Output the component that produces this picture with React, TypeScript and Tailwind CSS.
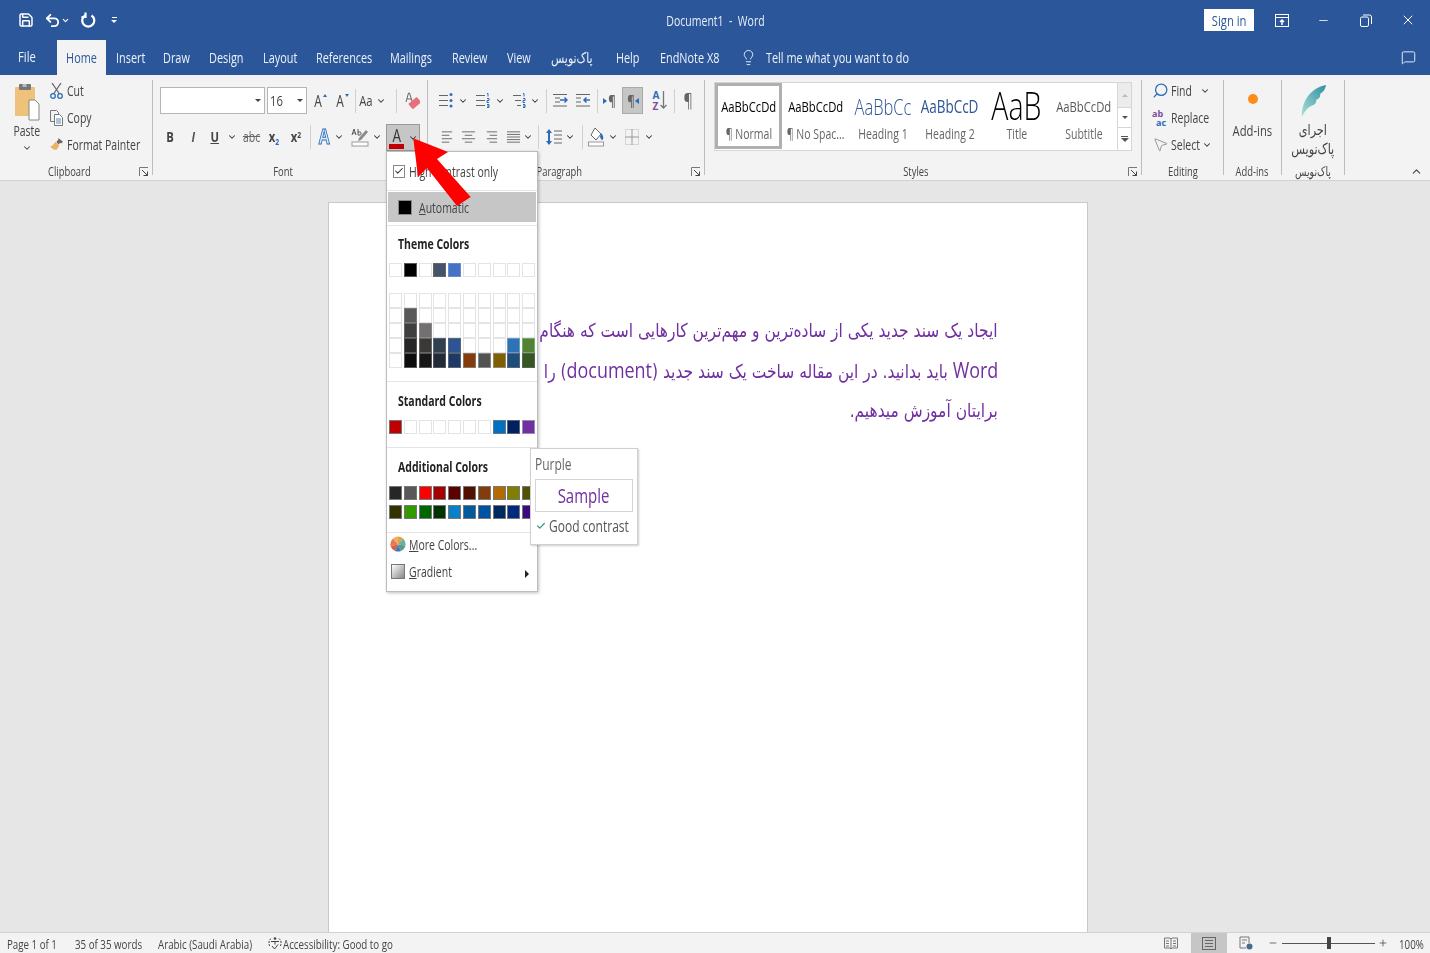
import React from 'react';
import { Save, Undo2, ChevronDown, ChevronUp, Lightbulb, MessageSquare, Minus, X, Check, Plus, Search, MousePointer2 } from 'lucide-react';

const tabs = [
  { t: 'Insert', w: 'w-[27px]' },
  { t: 'Draw', w: 'w-[26px]' },
  { t: 'Design', w: 'w-[34px]' },
  { t: 'Layout', w: 'w-[33px]' },
  { t: 'References', w: 'w-[54px]' },
  { t: 'Mailings', w: 'w-[42px]' },
  { t: 'Review', w: 'w-[35px]' },
  { t: 'View', w: 'w-[24px]' },
  { t: 'پاک‌نویس', w: 'w-[45px]' },
  { t: 'Help', w: 'w-[24px]' },
  { t: 'EndNote X8', w: 'w-[59px]' },
];

const W = 'border-[#e4e4e4] bg-white';
const themeRow = [W, 'border-[#555] bg-black', W, 'border-[#666] bg-[#44546a]', 'border-[#6d8ccf] bg-[#4472c4]', W, W, W, W, W];
const tints = [
  [W, W, W, W, W],
  [W, 'border-[#777] bg-[#595959]', 'border-[#666] bg-[#3f3f3f]', 'border-[#555] bg-[#262626]', 'border-[#555] bg-[#0d0d0d]'],
  [W, W, 'border-[#888] bg-[#757070]', 'border-[#666] bg-[#3b3838]', 'border-[#555] bg-[#171717]'],
  [W, W, W, 'border-[#567] bg-[#323f4f]', 'border-[#556] bg-[#222b35]'],
  [W, W, W, 'border-[#567] bg-[#2f5496]', 'border-[#567] bg-[#1f3864]'],
  [W, W, W, W, 'border-[#876] bg-[#843c0c]'],
  [W, W, W, W, 'border-[#888] bg-[#525252]'],
  [W, W, W, W, 'border-[#986] bg-[#7f6000]'],
  [W, W, W, 'border-[#69c] bg-[#2e74b5]', 'border-[#568] bg-[#1f4e79]'],
  [W, W, W, 'border-[#7a6] bg-[#538135]', 'border-[#565] bg-[#375623]'],
];
const standardRow = ['border-[#777] bg-[#c00000]', W, W, W, W, W, W, 'border-[#678] bg-[#0070c0]', 'border-[#567] bg-[#002060]', 'border-[#98b] bg-[#7030a0]'];
const additional = [
  'bg-[#262626]', 'bg-[#595959]', 'bg-[#ff0000]', 'bg-[#a80000]', 'bg-[#5c0000]', 'bg-[#511000]', 'bg-[#833c0b]', 'bg-[#b36b00]', 'bg-[#808000]', 'bg-[#525200]',
  'bg-[#333300]', 'bg-[#339900]', 'bg-[#006600]', 'bg-[#003300]', 'bg-[#0b7fc7]', 'bg-[#005a9e]', 'bg-[#0052a5]', 'bg-[#002960]', 'bg-[#002a7f]', 'bg-[#3b0a7f]',
];

const styles = [
  { sample: 'AaBbCcDd', label: '¶ Normal', cls: 'pt-[2px] text-[15px] text-black', selected: true },
  { sample: 'AaBbCcDd', label: '¶ No Spac...', cls: 'pt-[2px] text-[15px] text-black' },
  { sample: 'AaBbCc', label: 'Heading 1', cls: 'pt-[2px] text-[22px] leading-[30px] font-light text-[#2f5496]' },
  { sample: 'AaBbCcD', label: 'Heading 2', cls: 'pt-[2px] text-[18px] text-[#2f5496]' },
  { sample: 'AaB', label: 'Title', cls: 'text-[38px] leading-[34px] font-light text-black' },
  { sample: 'AaBbCcDd', label: 'Subtitle', cls: 'pt-[2px] text-[15px] text-[#595959]' },
];

// the reference's type is squeezed sideways, no installed font is that narrow
function Nar({ className = '', left, children }: { className?: string; left?: boolean; children: React.ReactNode }) {
  return (
    <span className={`flex shrink-0 ${left ? 'justify-start' : 'justify-center'} ${className}`}>
      <span className={`shrink-0 whitespace-nowrap scale-x-[0.75] ${left ? 'origin-left' : 'origin-center'}`}>{children}</span>
    </span>
  );
}

function Chev({ className = '' }: { className?: string }) {
  return (
    <span className={`flex shrink-0 items-center justify-center ${className}`}>
      <ChevronDown className="h-[10px] w-[10px] shrink-0 text-[#333]" strokeWidth={2.5} />
    </span>
  );
}

function Sep({ className = '' }: { className?: string }) {
  return <div className={`h-[24px] w-px shrink-0 bg-[#d0d0d0] ${className}`} />;
}

function Cell({ className = '', children }: { className?: string; children?: React.ReactNode }) {
  return <div className={`flex h-full shrink-0 items-center justify-center ${className}`}>{children}</div>;
}

function Lines({ rows }: { rows: [number, number][] }) {
  const step = 11 / (rows.length - 1);
  return (
    <svg width="15" height="14" viewBox="0 0 16 14" fill="none" stroke="#666" strokeWidth="1">
      {rows.map(([a, b], i) => (
        <line key={i} x1={a} x2={b} y1={1.5 + i * step} y2={1.5 + i * step} />
      ))}
    </svg>
  );
}

function ListIcon({ kind }: { kind: 'bullet' | 'number' | 'multi' }) {
  return (
    <svg width="15" height="17" viewBox="0 0 15 17">
      <g stroke="#666" strokeWidth="1">
        <line x1={kind === 'multi' ? 1 : 0} x2="9" y1="3.500" y2="3.500" />
        <line x1={kind === 'multi' ? 3 : 0} x2="9" y1="8.500" y2="8.500" />
        <line x1={kind === 'multi' ? 5 : 0} x2="9" y1="13.500" y2="13.500" />
      </g>
      {kind === 'bullet' ? (
        <g fill="#2b6cb8">
          <circle cx="12" cy="2.500" r="1.500" />
          <circle cx="12" cy="8.500" r="1.500" />
          <circle cx="12" cy="14" r="1.500" />
        </g>
      ) : (
        <g fill="none" stroke="#2b6cb8" strokeWidth="1">
          <path d="M11 1.500h1v3M11 6.500h2v2h-2v2h2M11 12.500h2v3h-2M11 14h2" />
        </g>
      )}
    </svg>
  );
}

function IndentIcon({ flip }: { flip?: boolean }) {
  return (
    <svg width="15" height="15" viewBox="0 0 15 15" fill="none">
      <g stroke="#666">
        <line x1="0" x2="14" y1="1.500" y2="1.500" />
        <line x1={flip ? 0 : 2} x2={flip ? 5 : 7} y1="5" y2="5" />
        <line x1={flip ? 0 : 2} x2={flip ? 5 : 7} y1="9" y2="9" />
        <line x1="0" x2="14" y1="13" y2="13" />
      </g>
      <path d={flip ? 'M14 7H8M10.500 4.500L8 7l2.500 2.500' : 'M7 7h7M11.500 4.500L14 7l-2.500 2.500'} stroke="#2b6cb8" strokeWidth="1.500" />
    </svg>
  );
}

function Launcher() {
  return (
    <svg width="10" height="10" viewBox="0 0 10 10" fill="none" stroke="#777" strokeWidth="1">
      <path d="M.5 9V.5H9" />
      <path d="M3 3l5.500 5.500M8.500 4.500v4h-4" stroke="#444" />
    </svg>
  );
}

function Group({ w, label, launcher, sep = true, children }: { w: string; label: React.ReactNode; launcher?: boolean; sep?: boolean; children: React.ReactNode }) {
  return (
    <div className={`flex h-full shrink-0 ${w}`}>
      <div className="flex min-w-0 flex-1 flex-col">
        <div className="h-[88px]">{children}</div>
        <div className="flex h-[18px] items-center pt-[2px] text-[12.500px] text-[#444]">
          <Nar className="min-w-0 flex-1">{label}</Nar>
          {launcher && <span className="flex w-[14px] justify-center pr-[2px]"><Launcher /></span>}
        </div>
      </div>
      {sep && <div className="my-[5px] w-px bg-[#bdbdbd]" />}
    </div>
  );
}

function Row({ children, className = '' }: { children: React.ReactNode; className?: string }) {
  return <div className={`flex h-[27px] items-center ${className}`}>{children}</div>;
}

function Swatches({ items }: { items: string[] }) {
  return (
    <div className="ml-[2px] grid w-[148px] grid-cols-10">
      {items.map((c, i) => <div key={i} className={`h-[14px] w-[13px] border ${c}`} />)}
    </div>
  );
}

function Heading({ className = 'h-[38px]', children }: { className?: string; children: React.ReactNode }) {
  return (
    <div className={`flex items-center pb-[2px] pl-[11px] text-[14px] font-bold text-[#222] ${className}`}>
      <Nar left>{children}</Nar>
    </div>
  );
}

function ColorMenu() {
  return (
    <div className="absolute left-[386px] top-[151px] h-[441px] w-[152px] border border-[#bcbcbc] bg-white shadow-[1px_1px_3px_rgba(0,0,0,0.25)]">
      <div className="flex h-[38px] items-center pl-[6px] text-[14px] text-[#444]">
        <span className="mr-[4px] flex h-[13px] w-[12px] items-center justify-center border border-[#888]">
          <Check className="h-[10px] w-[10px] text-[#333]" strokeWidth={2.5} />
        </span>
        <Nar left>High contrast only</Nar>
      </div>
      <div className="h-px bg-[#e4e4e4]" />
      <div className="mx-px mt-px flex h-[30px] items-center bg-[#c6c6c6] pl-[10px] text-[14px] text-[#444]">
        <span className="mr-[7px] h-[15px] w-[14px] border border-[#888] bg-black" />
        <Nar left><span className="underline">A</span>utomatic</Nar>
      </div>
      <div className="mt-[3px] h-px bg-[#e4e4e4]" />
      <Heading className="h-[37px]">Theme Colors</Heading>
      <Swatches items={themeRow} />
      <div className="ml-[2px] mt-[16px] grid w-[148px] grid-cols-10">
        {tints.map((col, i) => (
          <div key={i} className="flex flex-col">
            {col.map((c, j) => <div key={j} className={`h-[15px] w-[13px] border ${c}`} />)}
          </div>
        ))}
      </div>
      <div className="mt-[13px] h-px bg-[#e4e4e4]" />
      <Heading>Standard Colors</Heading>
      <Swatches items={standardRow} />
      <div className="mt-[13px] h-px bg-[#e4e4e4]" />
      <Heading>Additional Colors</Heading>
      <div className="ml-[2px] grid w-[148px] grid-cols-10 gap-y-[5px]">
        {additional.map((c, i) => <div key={i} className={`h-[14px] w-[13px] border border-[#777] ${c}`} />)}
      </div>
      <div className="mt-[13px] h-px bg-[#e4e4e4]" />
      <div className="flex h-[23px] items-center pb-px pl-[3px] text-[14px] text-[#444]">
        <svg width="16" height="17" viewBox="0 0 16 17" className="mr-[3px] shrink-0">
          <path d="M8 8.500L3 2.500A8 8 0 0 1 8 .5z" fill="#f0b060" />
          <path d="M8 8.500V.5a8 8 0 0 1 5 2z" fill="#e8a040" />
          <path d="M8 8.500l5-6a8 8 0 0 1 2.500 7z" fill="#6fae9e" />
          <path d="M8 8.500l7.500 1A8 8 0 0 1 11 15z" fill="#5a9a8a" />
          <path d="M8 8.500L11 15a8 8 0 0 1-6 0z" fill="#3f78c0" />
          <path d="M8 8.500L5 15A8 8 0 0 1 .5 10z" fill="#d86040" />
          <path d="M8 8.500L.5 10A8 8 0 0 1 3 2.500z" fill="#e87a50" />
        </svg>
        <Nar left><span className="underline">M</span>ore Colors...</Nar>
      </div>
      <div className="flex h-[31px] items-center pl-[4px] pr-[8px] text-[14px] text-[#444]">
        <span className="mr-[4px] h-[15px] w-[14px] shrink-0 border border-[#777] bg-gradient-to-br from-white to-[#888]" />
        <Nar left className="flex-1"><span className="underline">G</span>radient</Nar>
        <span className="mt-[4px] h-0 w-0 border-y-[4px] border-l-[4px] border-y-transparent border-l-[#222]" />
      </div>
    </div>
  );
}

function ContrastTip() {
  return (
    <div className="absolute left-[530px] top-[448px] flex h-[97px] w-[108px] flex-col border border-[#cfcfcf] bg-white px-[4px] shadow-[1px_1px_2px_rgba(0,0,0,0.2)]">
      <div className="flex h-[30px] items-center text-[16px] text-[#666]"><Nar left>Purple</Nar></div>
      <div className="flex h-[33px] items-center justify-center border border-[#d4d4d4] text-[20px] text-[#7030a0]"><Nar>Sample</Nar></div>
      <div className="flex h-[31px] items-center pb-[3px] text-[16px] text-[#555]">
        <Check className="ml-[1px] mr-[3px] h-[12px] w-[10px] shrink-0 text-[#3a9a8a]" strokeWidth={3} />
        <Nar left>Good contrast</Nar>
      </div>
    </div>
  );
}

export default function App() {
  return (
    <div className="relative flex h-[953px] w-[1430px] flex-col overflow-hidden bg-[#e6e6e6] font-['Open_Sans','DejaVu_Sans',sans-serif]">
      {/* title bar */}
      <div className="flex h-[40px] shrink-0 items-center bg-[#2b579a] text-white">
        <div className="flex w-[240px] items-center pl-[18px]">
          <Save className="h-[16px] w-[16px]" strokeWidth={2.2} />
          <Undo2 className="ml-[10px] h-[17px] w-[17px]" strokeWidth={2.6} />
          <ChevronDown className="h-[9px] w-[9px]" strokeWidth={3} />
          <svg width="15" height="16" viewBox="0 0 15 16" fill="none" stroke="white" strokeWidth="2.200" className="ml-[11px]">
            <path d="M10.500 3.500a6 6 0 1 1-6.500 0" />
            <path d="M4.500 .5v4.500H.5" />
          </svg>
          <span className="ml-[15px] flex flex-col items-center">
            <span className="mb-[2px] h-px w-[5px] bg-white" />
            <span className="h-0 w-0 border-x-[3px] border-t-[3px] border-x-transparent border-t-white" />
          </span>
        </div>
        <div className="flex-1 pl-[4px] text-[14px] text-[#e8eef7]"><Nar>Document1&nbsp; - &nbsp;Word</Nar></div>
        <div className="flex w-[244px] items-center justify-end pr-[14px]">
          <span className="mr-[21px] flex h-[22px] w-[50px] items-center justify-center bg-white text-[15px] text-[#2b579a]"><Nar>Sign in</Nar></span>
          <svg width="14" height="13" viewBox="0 0 14 13" fill="none" stroke="white" className="mr-[28px]">
            <rect x=".5" y=".5" width="13" height="12" />
            <path d="M.5 3.500h13" />
            <path d="M7 11V6M5 8l2-2 2 2" strokeWidth="1.500" />
          </svg>
          <Minus className="mr-[30px] h-[13px] w-[13px]" strokeWidth={1.5} />
          <svg width="12" height="13" viewBox="0 0 12 13" fill="none" stroke="white" className="mr-[28px]">
            <rect x=".5" y="3" width="8" height="9.500" rx="1.500" />
            <path d="M3 1h6.500a2 2 0 0 1 2 2v7" />
          </svg>
          <X className="h-[16px] w-[16px]" strokeWidth={1.5} />
        </div>
      </div>

      {/* tabs */}
      <div className="flex h-[35px] shrink-0 items-center bg-[#2b579a] text-[14.500px] text-[#eef2f8]">
        <span className="w-[57px] pb-[2px] pl-[18px]"><Nar left className="text-[15px]">File</Nar></span>
        <span className="flex h-full w-[49px] items-center justify-center bg-[#f3f3f3] text-[#2b579a]"><Nar>Home</Nar></span>
        <div className="ml-[10px] flex items-center gap-[20px]">
          {tabs.map(({ t, w }) => <Nar key={t} left className={w}>{t}</Nar>)}
        </div>
        <Lightbulb className="ml-[21px] h-[21px] w-[17px]" strokeWidth={1.3} />
        <Nar left className="ml-[9px] flex-1">Tell me what you want to do</Nar>
        <MessageSquare className="mr-[14px] h-[15px] w-[15px]" strokeWidth={1.5} />
      </div>

      {/* ribbon */}
      <div className="relative flex h-[106px] shrink-0 border-b border-[#d2d2d2] bg-[#f3f3f3] text-[#444]">
        <Group w="w-[153px]" label="Clipboard" launcher>
          <div className="flex h-full pl-[4px]">
            <div className="flex w-[46px] shrink-0 flex-col items-center pt-[9px]">
              <svg width="26" height="37" viewBox="0 0 26 37" className="shrink-0">
                <rect x="1" y="3" width="20" height="29" rx="1" fill="#eec27a" />
                <rect x="5" y="0" width="12" height="6" rx="1" fill="#777" />
                <rect x="8.500" y="0" width="4" height="3" fill="#bbb" />
                <path d="M15 16h6l4 4v16H15z" fill="#fff" stroke="#888" />
              </svg>
              <Nar className="h-[20px] text-[14px] leading-[20px]">Paste</Nar>
              <ChevronDown className="mt-[2px] h-[10px] w-[10px]" strokeWidth={2.5} />
            </div>
            <div className="pt-[2px] text-[14px]">
              <Row>
                <svg width="13" height="17" viewBox="0 0 13 17" fill="none" className="mr-[4px] shrink-0">
                  <path d="M2 1l7.500 11M11 1L3.500 12" stroke="#666" strokeWidth="1.300" />
                  <circle cx="3" cy="14" r="2.300" stroke="#2b6cb8" strokeWidth="1.300" />
                  <circle cx="10" cy="14" r="2.300" stroke="#2b6cb8" strokeWidth="1.300" />
                </svg>
                <Nar left>Cut</Nar>
              </Row>
              <Row>
                <svg width="13" height="16" viewBox="0 0 13 16" fill="none" stroke="#777" className="mr-[4px] shrink-0">
                  <path d="M.5.5h6l2 2v9h-8z" fill="#f3f3f3" />
                  <path d="M4.500 4.500h5l3 3v8h-8z" fill="#fff" />
                  <path d="M6 9h5M6 11h5M6 13h5" stroke="#5a86c0" />
                </svg>
                <Nar left>Copy</Nar>
              </Row>
              <Row>
                <svg width="13" height="13" viewBox="0 0 14 14" className="mr-[4px] shrink-0">
                  <path d="M9 0l5 4-2 2-1-1-2 2-2-3 2-2z" fill="#666" />
                  <path d="M6 4l4 4-3 5C5 13 2 12 0 9c3 0 4-3 6-5z" fill="#ecb45e" />
                </svg>
                <Nar left>Format Painter</Nar>
              </Row>
            </div>
          </div>
        </Group>

        <Group w="w-[275px]" label="Font" launcher>
          <div className="pt-[12px]">
            <Row>
              <div className="ml-[7px] flex h-full w-[105px] shrink-0 items-center justify-end border border-[#b5b5b5] bg-white pr-[3px]">
                <span className="h-0 w-0 border-x-[3px] border-t-[3px] border-x-transparent border-t-[#444]" />
              </div>
              <div className="ml-[2px] flex h-full w-[40px] shrink-0 items-center justify-between border border-[#b5b5b5] bg-white pl-[2px] pr-[3px] text-[15px]">
                <Nar left className="w-[16px]">16</Nar>
                <span className="h-0 w-0 border-x-[3px] border-t-[3px] border-x-transparent border-t-[#444]" />
              </div>
              <Cell className="ml-px w-[24px] text-[16px]">
                <Nar>A</Nar>
                <span className="-ml-[1px] mb-[10px] h-0 w-0 border-x-[2px] border-b-[3px] border-x-transparent border-b-[#2b6cb8]" />
              </Cell>
              <Cell className="w-[20px] text-[16px]">
                <Nar>A</Nar>
                <span className="-ml-[1px] mb-[10px] h-0 w-0 border-x-[2px] border-t-[3px] border-x-transparent border-t-[#2b6cb8]" />
              </Cell>
              <Sep className="ml-[3px]" />
              <Cell className="w-[32px] text-[15px]"><Nar className="w-[14px]">Aa</Nar><Chev className="ml-[3px]" /></Cell>
              <Sep className="ml-[8px]" />
              <Cell className="w-[30px]">
                <svg width="15" height="18" viewBox="0 0 15 18">
                  <rect x="4" y="8" width="11" height="7" rx="1" fill="#e8707e" transform="rotate(-40 9 11)" />
                  <path d="M1 10L3.500 1h1L7 9M2 7h4" stroke="#666" fill="none" />
                </svg>
              </Cell>
            </Row>
            <Row className="mt-[10px] pb-[2px]">
              <Cell className="ml-[5px] w-[24px] text-[15px] font-bold"><Nar>B</Nar></Cell>
              <Cell className="w-[22px] text-[15px] font-bold italic text-[#555]"><Nar>I</Nar></Cell>
              <Cell className="w-[22px] text-[15px] font-bold"><Nar><span className="underline">U</span></Nar></Cell>
              <Chev className="w-[12px]" />
              <Cell className="w-[28px] text-[14px] text-[#666]"><Nar><span className="line-through">abc</span></Nar></Cell>
              <Cell className="w-[16px] text-[15px] font-bold"><Nar>x<sub className="text-[9px] text-[#2b6cb8]">2</sub></Nar></Cell>
              <Cell className="w-[28px] text-[15px] font-bold"><Nar>x<sup className="text-[9px]">2</sup></Nar></Cell>
              <Sep />
              <Cell className="ml-[2px] w-[22px] text-[21px] font-bold text-[#dcebfa] [-webkit-text-stroke:1px_#2b6cb8]"><Nar>A</Nar></Cell>
              <Chev className="w-[8px]" />
              <Cell className="ml-[4px] w-[26px]">
                <svg width="18" height="20" viewBox="0 0 18 20" fill="none">
                  <path d="M1 8l2-6 2 6M2 6h2M7 2v6M7 5h2q1 0 1 1.500T9 8H7" stroke="#555" />
                  <path d="M15 3l2 2-7 8-3 1 1-3z" fill="#8a8a8a" />
                  <rect x="1" y="15" width="16" height="4" fill="#fff" stroke="#999" />
                </svg>
              </Cell>
              <Chev className="w-[8px]" />
              <div className="ml-[5px] flex h-[27px] w-[34px] shrink-0 items-center self-start border border-[#999] bg-[#c6c6c6] pl-[2px]">
                <span className="flex w-[15px] shrink-0 flex-col items-center">
                  <Nar className="text-[18px] leading-[16px] text-[#333]">A</Nar>
                  <span className="mt-px h-[5px] w-[15px] bg-[#c00000]" />
                </span>
                <Chev className="ml-[4px]" />
              </div>
            </Row>
          </div>
        </Group>

        <Group w="w-[277px]" label="Paragraph" launcher>
          <div className="pt-[12px]">
            <Row>
              <Cell className="ml-[7px] w-[22px]"><ListIcon kind="bullet" /></Cell>
              <Chev className="w-[12px]" />
              <Cell className="ml-[3px] w-[22px]"><ListIcon kind="number" /></Cell>
              <Chev className="w-[11px]" />
              <Cell className="ml-[3px] w-[22px]"><ListIcon kind="multi" /></Cell>
              <Chev className="w-[10px]" />
              <Sep className="ml-[6px]" />
              <Cell className="w-[26px]"><IndentIcon /></Cell>
              <Cell className="w-[20px]"><IndentIcon flip /></Cell>
              <Sep className="ml-[4px]" />
              <Cell className="w-[24px] text-[15px] font-bold text-[#666]">
                <span className="h-0 w-0 border-y-[3px] border-l-[4px] border-y-transparent border-l-[#2b6cb8]" />
                <Nar>¶</Nar>
              </Cell>
              <Cell className="w-[21px] border border-[#aaa] bg-[#c6c6c6] text-[15px] font-bold text-[#666]">
                <Nar>¶</Nar>
                <span className="h-0 w-0 border-y-[3px] border-r-[4px] border-y-transparent border-r-[#2b6cb8]" />
              </Cell>
              <Cell className="ml-[6px] w-[22px]">
                <span className="flex flex-col text-[10px] font-bold leading-[11px]">
                  <span className="text-[#2b6cb8]">A</span><span className="text-[#7a4fa0]">Z</span>
                </span>
                <svg width="7" height="19" viewBox="0 0 7 19" fill="none" stroke="#777" className="ml-px">
                  <path d="M3.500 0v17M.5 14l3 3 3-3" strokeWidth="1.300" />
                </svg>
              </Cell>
              <Sep className="ml-[3px]" />
              <Cell className="w-[26px] text-[19px] text-[#666]"><Nar>¶</Nar></Cell>
            </Row>
            <Row className="mt-[10px] pb-[2px]">
              <Cell className="ml-[7px] w-[22px]"><Lines rows={[[3, 14], [3, 11], [3, 14], [3, 11]]} /></Cell>
              <Cell className="w-[22px]"><Lines rows={[[1, 15], [4, 12], [1, 15], [4, 12]]} /></Cell>
              <Cell className="w-[24px]"><Lines rows={[[3, 14], [6, 14], [3, 14], [6, 14]]} /></Cell>
              <Cell className="w-[20px]"><Lines rows={[[1, 15], [1, 15], [1, 15], [1, 15], [1, 15]]} /></Cell>
              <Chev className="w-[10px]" />
              <Sep className="ml-[5px]" />
              <Cell className="ml-[4px] w-[22px]">
                <svg width="16" height="20" viewBox="0 0 16 20" fill="none">
                  <path d="M3 3v14" stroke="#2b6cb8" strokeWidth="2" />
                  <path d="M0 6l3-4 3 4M0 14l3 4 3-4" fill="#2b6cb8" />
                  <path d="M8 4h8M8 8h8M8 12h8M8 16h8" stroke="#666" />
                </svg>
              </Cell>
              <Chev className="w-[10px]" />
              <Sep className="ml-[7px]" />
              <Cell className="w-[26px]">
                <svg width="17" height="20" viewBox="0 0 17 20" fill="none">
                  <path d="M7 1l6 6-5 6-5-5z" stroke="#666" fill="#fff" />
                  <path d="M13 6q3 3 2 6t-3-2z" fill="#2b6cb8" />
                  <rect x=".5" y="15" width="15" height="4" fill="#fff" stroke="#999" />
                </svg>
              </Cell>
              <Chev className="w-[8px]" />
              <Cell className="ml-[3px] w-[24px]">
                <svg width="14" height="16" viewBox="0 0 14 16" fill="none" stroke="#bbb">
                  <rect x=".5" y=".5" width="13" height="15" strokeDasharray="1 1" />
                  <path d="M7 0v16M0 8h14" stroke="#999" />
                </svg>
              </Cell>
              <Chev className="w-[10px]" />
            </Row>
          </div>
        </Group>

        <Group w="w-[437px]" label="Styles" launcher>
          <div className="ml-[9px] mt-[7px] flex h-[69px] w-[418px] border border-[#d6d6d6] bg-white">
            {styles.map((s) => (
              <div key={s.label} className={`flex h-[66px] w-[67px] shrink-0 flex-col overflow-hidden border-[3px] ${s.selected ? 'border-[#b0b0b0]' : 'border-transparent'}`}>
                <Nar className={`h-[38px] items-center ${s.cls}`}>{s.sample}</Nar>
                <Nar className="h-[20px] items-center text-[14px] leading-[20px] text-[#666]">{s.label}</Nar>
              </div>
            ))}
            <div className="flex w-[15px] flex-col border-l border-[#d6d6d6]">
              <div className="flex h-[24px] items-center justify-center bg-[#ececec]">
                <span className="h-0 w-0 border-x-[3px] border-b-[3px] border-x-transparent border-b-[#bbb]" />
              </div>
              <div className="flex h-[21px] items-center justify-center border-y border-[#d6d6d6]">
                <span className="h-0 w-0 border-x-[3px] border-t-[3px] border-x-transparent border-t-[#555]" />
              </div>
              <div className="flex flex-1 flex-col items-center justify-center">
                <span className="mb-[1px] h-px w-[7px] bg-[#555]" />
                <span className="h-0 w-0 border-x-[4px] border-t-[4px] border-x-transparent border-t-[#555]" />
              </div>
            </div>
          </div>
        </Group>

        <Group w="w-[82px]" label="Editing">
          <div className="pl-[10px] pt-[2px] text-[14px]">
            <Row>
              <Search className="mr-[2px] h-[17px] w-[17px] shrink-0 -scale-x-100 text-[#2b6cb8]" strokeWidth={1.8} />
              <Nar left className="w-[21px]">Find</Nar>
              <Chev className="ml-[8px]" />
            </Row>
            <Row>
              <span className="mr-[2px] flex w-[17px] shrink-0 flex-col text-[9px] font-bold leading-[9px]">
                <span className="text-[#7a4fa0]">ab</span><span className="pl-[4px] text-[#2b6cb8]">ac</span>
              </span>
              <Nar left>Replace</Nar>
            </Row>
            <Row>
              <MousePointer2 className="mr-[2px] h-[17px] w-[17px] shrink-0 text-[#888]" strokeWidth={1.2} />
              <Nar left className="w-[30px]">Select</Nar>
              <Chev className="ml-[1px]" />
            </Row>
          </div>
        </Group>

        <Group w="w-[58px]" label="Add-ins">
          <div className="flex flex-col items-center pt-[19px] text-[15px]">
            <span className="h-[10px] w-[10px] rounded-full bg-[#ff8c1a] blur-[0.5px]" />
            <Nar className="mt-[16px] h-[20px] leading-[20px]">Add-ins</Nar>
          </div>
        </Group>

        <Group w="w-[63px]" label="پاک‌نویس">
          <div className="flex flex-col items-center pt-[9px] text-[15px]">
            <svg width="28" height="34" viewBox="0 0 28 34" className="shrink-0">
              <defs>
                <linearGradient id="quill" x1="0" y1="1" x2="1" y2="0">
                  <stop offset="0" stopColor="#a8e0d8" />
                  <stop offset="1" stopColor="#2f8fa0" />
                </linearGradient>
              </defs>
              <path d="M3 33C2 20 10 4 27 1c-1 5-3 7-6 9 1 2-1 5-4 6 1 2-1 5-5 6-2 1-6 4-9 11z" fill="url(#quill)" />
            </svg>
            <Nar className="mt-[2px] h-[19px] leading-[19px]">اجرای</Nar>
            <Nar className="h-[19px] leading-[19px]">پاک‌نویس</Nar>
          </div>
        </Group>

        <div className="flex flex-1 items-end justify-end pb-[2px] pr-[7px]">
          <ChevronUp className="h-[13px] w-[13px]" strokeWidth={2} />
        </div>
      </div>

      {/* document */}
      <div className="min-h-0 flex-1 pl-[328px] pt-[21px]">
        <div className="h-full w-[760px] overflow-hidden border border-b-0 border-[#c8c8c8] bg-white pr-[89px] pt-[107px] font-['DejaVu_Sans',sans-serif] text-[19px] text-[#7030a0]" dir="rtl">
          <div className="flex h-[40px] items-center">
            <span className="shrink-0 origin-right scale-x-[0.815] whitespace-nowrap">ایجاد یک سند جدید یکی از ساده‌ترین و مهم‌ترین کارهایی است که هنگام استفاده از</span>
          </div>
          <div className="flex h-[39px] items-center">
            <span className="shrink-0 origin-right scale-x-[0.815] whitespace-nowrap">
              <span className="font-['Open_Sans'] text-[22px]">Word</span> باید بدانید. در این مقاله ساخت یک سند جدید (<span className="font-['Open_Sans'] text-[22px]">document</span>) را در
            </span>
          </div>
          <div className="flex h-[42px] items-center">
            <span className="shrink-0 origin-right scale-x-[0.815] whitespace-nowrap">برایتان آموزش میدهیم.</span>
          </div>
        </div>
      </div>

      {/* status bar */}
      <div className="flex h-[21px] shrink-0 items-center border-t border-[#d2d2d2] bg-[#f3f3f3] pl-[7px] text-[13px] text-[#444]">
        <Nar left className="w-[50px] pt-[3px]">Page 1 of 1</Nar>
        <Nar left className="ml-[18px] w-[66px] pt-[3px]">35 of 35 words</Nar>
        <Nar left className="ml-[17px] w-[92px] pt-[3px]">Arabic (Saudi Arabia)</Nar>
        <svg width="14" height="15" viewBox="0 0 14 15" fill="none" stroke="#444" className="ml-[18px] shrink-0">
          <path d="M3 2.500a6 6 0 0 0-1 8M11 2.500a6 6 0 0 1 1 8" strokeDasharray="2 1" />
          <circle cx="7" cy="2.500" r="1.300" fill="#444" stroke="none" />
          <path d="M3 5.500h8M7 5.500v3M4 10l2.500 3L10 8.500" />
        </svg>
        <Nar left className="ml-px flex-1 pt-[3px]">Accessibility: Good to go</Nar>
        <svg width="14" height="13" viewBox="0 0 14 13" fill="none" stroke="#777" className="shrink-0">
          <path d="M.5 1h5.500l1 1 1-1h5.500v10H8l-1 1-1-1H.5zM7 2v10M2 4h3M2 6.500h3M2 9h3M9 4h3M9 6.500h3M9 9h3" />
        </svg>
        <div className="ml-[13px] flex h-full w-[36px] shrink-0 items-center justify-center bg-[#c6c6c6]">
          <svg width="14" height="13" viewBox="0 0 14 13" fill="none" stroke="#666"><rect x=".5" y=".5" width="13" height="12" /><path d="M3 3.500h8M3 6.500h8M3 9.500h8" /></svg>
        </div>
        <svg width="14" height="14" viewBox="0 0 14 14" fill="none" stroke="#777" className="ml-[12px] shrink-0">
          <path d="M1 1h9v6M1 1v11h6M3 4h5M3 7h3" />
          <circle cx="10.500" cy="10.500" r="3" fill="#4a6a8a" stroke="none" />
        </svg>
        <Minus className="ml-[15px] h-[10px] w-[10px] shrink-0 text-[#555]" strokeWidth={2} />
        <div className="ml-[4px] flex h-[10px] w-[93px] shrink-0 items-center">
          <div className="h-px w-[45px] bg-[#555]" />
          <div className="h-[12px] w-[4px] bg-[#444]" />
          <div className="h-px flex-1 bg-[#555]" />
        </div>
        <Plus className="ml-[3px] h-[10px] w-[10px] shrink-0 text-[#555]" strokeWidth={2} />
        <Nar left className="ml-[11px] w-[31px] pt-[3px]">100%</Nar>
      </div>

      {/* open menu, tooltip and the red call-out */}
      <ColorMenu />
      <ContrastTip />
      <svg className="absolute left-[405px] top-[130px]" width="75" height="85" viewBox="405 130 75 85">
        <path d="M413.300 138.300L448 152l-11 7 33.700 38-13.700 9-30-38-9 9z" fill="#fe0000" />
      </svg>
    </div>
  );
}
